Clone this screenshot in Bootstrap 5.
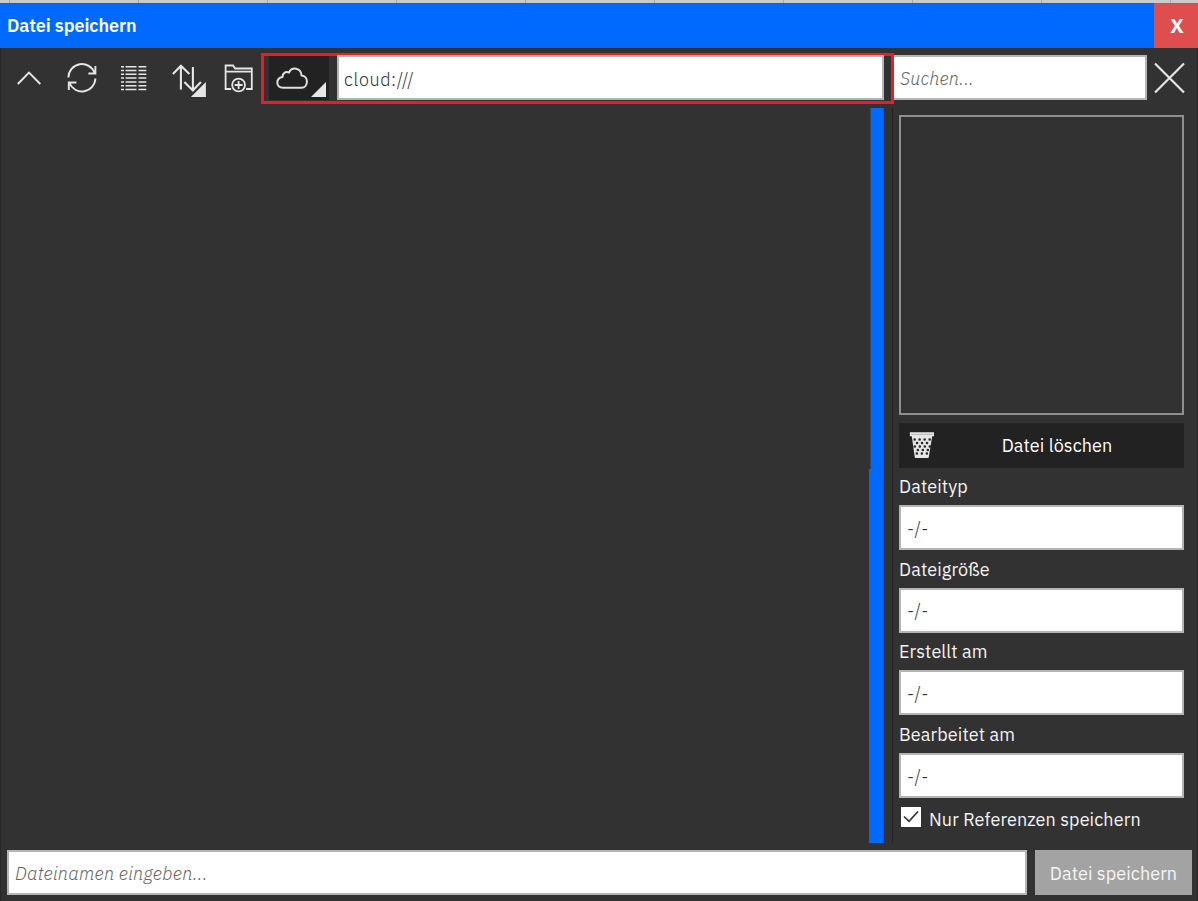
<!DOCTYPE html>
<html lang="de">
<head>
<meta charset="utf-8">
<meta name="viewport" content="width=device-width, initial-scale=1">
<title>Datei speichern</title>
<link href="https://cdn.jsdelivr.net/npm/bootstrap@5.3.0/dist/css/bootstrap.min.css" rel="stylesheet">
<style>
  body { font-family: "IBM Plex Sans", Roboto, "Noto Sans", sans-serif; font-size: 18px; line-height: 24px; background: #323232; color: #f4f4f4; letter-spacing: .1px; }
  .app { height: 901px; }
  .backdrop { height: 3px; background: repeating-linear-gradient(90deg, #cbcbcb 0 9px, #a8a8a8 9px 10px, #cbcbcb 10px 129px); }
  .titlebar { height: 45px; background: #006aff; padding-left: 7px; font-weight: 600; letter-spacing: -.08px; color: #fff; box-shadow: inset 0 1px #1c5fc4; }
  .btn-x { width: 44px; background: #df4e4e; color: #fff; font-weight: 700; font-size: 20px; }
  .btn-x, .tool, .btn-flat { border: 0; border-radius: 0; padding: 0; }
  .shell { border-left: 1px solid #282828; border-right: 1px solid #282828; min-height: 0; }
  .toolbar { height: 60px; padding-top: 5px; }
  .tools { width: 260px; }
  .tool { width: 52.6px; height: 51px; }
  .tool svg { display: block; }
  .pathbox { width: 633px; height: 51px; border: 3px solid #ed1c24; padding: 0 7px 0 5px; }
  .cloud { width: 60px; height: 44px; background: #222; margin-right: 8px; border: 0; border-radius: 0; padding: 0; }
  .form-control, .form-control:focus { height: 45px; border: 2px solid #b5b5b5; border-radius: 0; padding: 2px 5px 0 6px; font-size: 18px; color: #333; background: #fff; letter-spacing: .3px; font-weight: 300; box-shadow: none; }
  .form-control::placeholder { font-style: italic; color: #666; }
  .pathbox .form-control { margin-top: -1px; padding: 3px 5px 0 5px; letter-spacing: .6px; }
  .search.form-control { width: 253px; border-left: 0; padding-left: 6px; margin-top: 2px; letter-spacing: .15px; }
  .files { width: 868px; }
  .scroll { width: 15px; background: #006aff; height: 735px; border-right: 1px solid #1c58bf; }
  .scroll span { display: block; width: 2px; height: 361px; background: #264b83; border-left: 1px solid #323232; }
  .side { width: 305px; height: 735px; margin-left: 8px; border-left: 1px solid #222; padding: 7px 13px 0 6px; }
  .preview { height: 300px; border: 2px solid #8f8f8f; margin-bottom: 8px; }
  .btn-flat { height: 45px; font-size: 18px; letter-spacing: .08px; }
  .del { background: #222; color: #fff; width: 100%; }
  .fields { margin-top: -.6px; }
  .side label.cap { display: block; height: 37.67px; padding-top: 7.6px; }
  .side .form-control { padding: 1px 5px 0 6px; }
  .check { width: 20px; height: 20px; background: #fff; margin: 0 8px 5px 2px; }
  .footbar { height: 58px; padding: 7px 5px 0 6px; gap: 8px; }
  .save { width: 157px; background: #a3a3a3; color: #f5f5f5; padding-top: 2px; }
</style>
</head>
<body>
<div class="app d-flex flex-column overflow-hidden">
  <div class="backdrop flex-shrink-0"></div>
  <header class="titlebar d-flex align-items-stretch justify-content-between flex-shrink-0">
    <span class="align-self-center">Datei speichern</span>
    <button class="btn btn-x" type="button"><span style="padding-left:2px">X</span></button>
  </header>
  <main class="shell flex-grow-1 d-flex flex-column">
    <div class="toolbar d-flex flex-shrink-0">
      <div class="tools d-flex flex-shrink-0">
        <button class="btn tool" type="button" aria-label="Nach oben"><svg width="53" height="51" viewBox="1 53 53 51" fill="none" stroke="#e6e6e6" stroke-width="1.9"><path d="M17.800 84L29 72.500L40.300 84"/></svg></button>
        <button class="btn tool" type="button" aria-label="Aktualisieren"><svg width="53" height="51" viewBox="53.600 53 53 51" fill="none" stroke="#e6e6e6" stroke-width="1.9"><path d="M68 77.500A13.500 13.500 0 0 1 94.200 73M95 66V73.500H88M95 78.500A13.500 13.500 0 0 1 69 83M68.400 90V82.500H76"/></svg></button>
        <button class="btn tool" type="button" aria-label="Ansicht"><svg width="53" height="51" viewBox="106.200 53 53 51" fill="none" stroke="#e6e6e6" stroke-width="1.500"><path d="M121.200 66.700H146.500M121.200 70.500H146.500M121.200 74.300H146.500M121.200 78.100H146.500M121.200 81.900H146.500M121.200 85.700H146.500M121.200 89.500H146.500" stroke-dasharray="3 1.500 11 2 7.800 9"/></svg></button>
        <button class="btn tool" type="button" aria-label="Sortieren"><svg width="53" height="51" viewBox="159.100 53 53 51" fill="none" stroke="#e6e6e6" stroke-width="2.100"><path d="M181 89.500V66M173 74L181 65.800L189.500 74M193 67V90.500M184.500 82L193 90.500L201 82"/><path d="M206 82V97H191Z" fill="#e6e6e6" stroke="none"/></svg></button>
        <button class="btn tool" type="button" aria-label="Neuer Ordner"><svg width="53" height="51" viewBox="211.400 53 53 51" fill="none" stroke="#e6e6e6" stroke-width="1.800"><path d="M231.500 89H226V65.500H233.500L235.500 68.500H252.200V89H246.500M226 71.700H252"/><circle cx="239" cy="85" r="6.400"/><path d="M235 85H243M239 81V89"/></svg></button>
      </div>
      <div class="pathbox d-flex flex-shrink-0">
        <button class="cloud flex-shrink-0" type="button" aria-label="Speicherort"><svg class="d-block" width="60" height="44" viewBox="269 56.500 60 44" fill="none" stroke="#e0e0e0" stroke-width="2" stroke-linejoin="round"><path d="M283 88.200C275.500 88.200 275.500 78.800 282.500 77.500C282.500 73.500 286 71.500 289 73C292 67 301 68 301.500 76C309 76.500 308.500 88.200 301.500 88.200Z"/><path d="M326 82.500V97.500H311Z" fill="#e6e6e6" stroke="none"/></svg></button>
        <input class="form-control flex-grow-1 w-auto" value="cloud:///" aria-label="Pfad">
      </div>
      <input class="form-control search flex-shrink-0" placeholder="Suchen..." aria-label="Suchen">
      <button class="btn border-0 p-0 flex-grow-1 overflow-hidden" type="button" aria-label="Suche leeren"><svg class="d-block" width="50" height="51" viewBox="1147 54.500 50 51" fill="none" stroke="#e6e6e6" stroke-width="2.200"><path d="M1155 63L1184 92M1184 63L1155 92"/></svg></button>
    </div>
    <section class="d-flex flex-shrink-0">
      <div class="files"></div>
      <div class="scroll"><span></span></div>
      <aside class="side flex-shrink-0">
        <div class="preview"></div>
        <button class="btn btn-flat del d-flex align-items-center" type="button">
          <svg width="45" height="45" viewBox="899 423 45 45" fill="none" stroke="#e6e6e6"><path d="M912.500 436L915.500 457.200H928L931.500 436Z" fill="#e6e6e6" stroke-width="1.500" stroke-linejoin="round"/><path d="M910.500 433H933.300V435.500H910.500Z" fill="#b5b5b5" stroke-width="1.300"/><path d="M914.600 439.500H931M917 443H929M914.800 446.500H930M917.800 450H928M916.800 453.500H929" stroke="#2a2a2a" stroke-width="2.500" stroke-linecap="round" stroke-dasharray=".1 4.900"/></svg>
          <span class="flex-grow-1 text-center" style="padding-right:14px">Datei löschen</span>
        </button>
        <div class="fields">
          <label class="cap" for="typ">Dateityp</label><input class="form-control" id="typ" value="-/-">
          <label class="cap" for="size">Dateigröße</label><input class="form-control" id="size" value="-/-">
          <label class="cap" for="made">Erstellt am</label><input class="form-control" id="made" value="-/-">
          <label class="cap" for="edit">Bearbeitet am</label><input class="form-control" id="edit" value="-/-">
        </div>
        <div class="d-flex align-items-center" style="padding-top:9px">
          <span class="check"><svg class="d-block" width="20" height="20" viewBox="0 0 20 20" fill="none" stroke="#333" stroke-width="1.700"><path d="M3 9.500L8 14.300L17 4.500"/></svg></span>
          <span>Nur Referenzen speichern</span>
        </div>
      </aside>
    </section>
    <footer class="footbar d-flex flex-shrink-0">
      <input class="form-control flex-grow-1 w-auto" placeholder="Dateinamen eingeben..." aria-label="Dateiname">
      <button class="btn btn-flat save flex-shrink-0" type="button">Datei speichern</button>
    </footer>
  </main>
</div>
<script src="https://cdn.jsdelivr.net/npm/bootstrap@5.3.0/dist/js/bootstrap.bundle.min.js"></script>
</body>
</html>
